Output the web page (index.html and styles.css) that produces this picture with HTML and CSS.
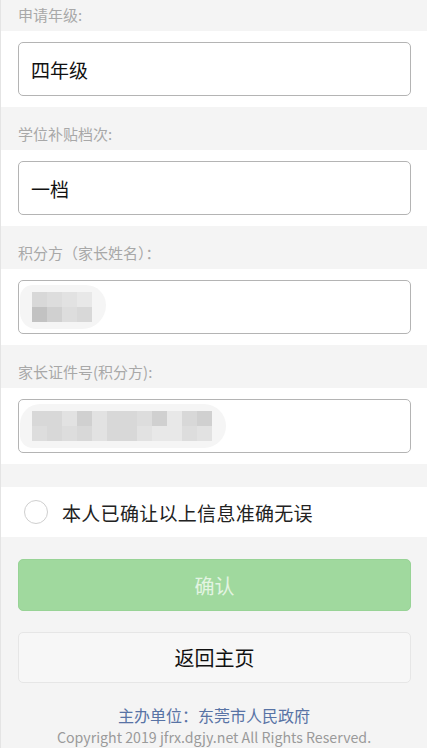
FILE: index.html
```html
<!DOCTYPE html>
<html lang="zh-CN">
<head>
<meta charset="utf-8">
<title>确认信息</title>
<link rel="stylesheet" href="styles.css">
</head>
<body>
<div class="page">
  <div class="label">申请年级:</div>
  <div class="field-row"><div class="input">四年级</div></div>

  <div class="label">学位补贴档次:</div>
  <div class="field-row"><div class="input">一档</div></div>

  <div class="label">积分方（家长姓名）：</div>
  <div class="field-row">
    <div class="input blurred">
      <div class="haze haze-name">
        <div class="mosaic mosaic-name">
          <span class="g3"></span><span class="g4"></span><span class="g5"></span><span class="g6"></span>
          <span class="g1"></span><span class="g2"></span><span class="g4"></span><span class="g3"></span>
        </div>
      </div>
    </div>
  </div>

  <div class="label">家长证件号(积分方):</div>
  <div class="field-row">
    <div class="input blurred">
      <div class="haze haze-id">
        <div class="mosaic mosaic-id">
          <span class="g3"></span><span class="g3"></span><span class="g5"></span><span class="g2"></span><span class="g5"></span><span class="g3"></span><span class="g3"></span><span class="g4"></span><span class="g2"></span><span class="g6"></span><span class="g3"></span><span class="g2"></span>
          <span class="g4"></span><span class="g3"></span><span class="g4"></span><span class="g3"></span><span class="g5"></span><span class="g3"></span><span class="g3"></span><span class="g5"></span><span class="g6"></span><span class="g6"></span><span class="g4"></span><span class="g5"></span>
        </div>
      </div>
    </div>
  </div>

  <div class="spacer"></div>

  <div class="check-row">
    <span class="radio"></span>
    <span class="check-text">本人已确让以上信息准确无误</span>
  </div>

  <div class="actions">
    <div class="btn btn-confirm">确认</div>
    <div class="btn btn-back">返回主页</div>
  </div>

  <div class="footer">
    <div class="sponsor">主办单位：东莞市人民政府</div>
    <div class="copyright">Copyright 2019 jfrx.dgjy.net All Rights Reserved.</div>
  </div>
</div>
</body>
</html>
```
FILE: styles.css
```css
html, body {
  margin: 0;
  padding: 0;
  background: #f4f4f4;
  font-family: "Noto Sans CJK SC", "Microsoft YaHei", sans-serif;
  overflow: hidden;
}

.page {
  border-left: 1px solid #e4e4e4;
  margin-top: -12px;
  min-height: 760px;
  background: #f4f4f4;
}

.label {
  padding: 19px 18px 8px 17px;
  font-size: 15px;
  line-height: 16px;
  height: 16px;
  color: #a8a8a8;
}

.field-row {
  background: #fff;
  padding: 11px 16px 11px 17px;
}

.input {
  box-sizing: border-box;
  height: 54px;
  border: 1px solid #b4b4b4;
  border-radius: 5px;
  padding-left: 12px;
  display: flex;
  align-items: center;
  font-size: 19px;
  color: #111;
  background: #fff;
}

.input.blurred {
  padding-left: 1px;
}

.haze {
  background: #f5f5f5;
  display: flex;
  align-items: center;
  height: 44px;
  padding-left: 12px;
}

.haze-name {
  width: 74px;
  border-radius: 14px 22px 26px 18px;
}

.haze-id {
  width: 194px;
  border-radius: 22px 24px 24px 14px;
}

.mosaic {
  display: grid;
  grid-auto-rows: 15px;
}

.mosaic-name {
  grid-template-columns: repeat(4, 15px);
}

.mosaic-id {
  grid-template-columns: repeat(12, 15px);
}

.g1 { background: #c2c2c2; }
.g2 { background: #d0d0d0; }
.g3 { background: #d8d8d8; }
.g4 { background: #dddddd; }
.g5 { background: #e2e2e2; }
.g6 { background: #e8e8e8; }

.spacer {
  height: 23px;
}

.check-row {
  background: #fff;
  height: 50px;
  display: flex;
  align-items: center;
  padding-left: 23px;
}

.radio {
  box-sizing: border-box;
  width: 24px;
  height: 24px;
  border: 1px solid #cfcfcf;
  border-radius: 50%;
  margin-right: 14px;
}

.check-text {
  font-size: 19px;
  letter-spacing: 0.3px;
  color: #222;
}

.actions {
  display: flex;
  flex-direction: column;
  gap: 21px;
  padding: 22px 16px 0 17px;
}

.btn {
  box-sizing: border-box;
  display: flex;
  align-items: center;
  justify-content: center;
  border-radius: 5px;
  font-size: 20px;
}

.btn-confirm {
  height: 52px;
  background: #a0d99e;
  border: 1px solid #98d396;
  color: #e3f4e2;
}

.btn-back {
  height: 51px;
  background: #f7f7f7;
  border: 1px solid #e6e6e6;
  color: #111;
}

.footer {
  padding-top: 21px;
  text-align: center;
}

.sponsor {
  font-size: 16px;
  line-height: 22px;
  color: #5873a5;
}

.copyright {
  font-size: 14.2px;
  line-height: 23px;
  color: #9a9a9a;
}
```
